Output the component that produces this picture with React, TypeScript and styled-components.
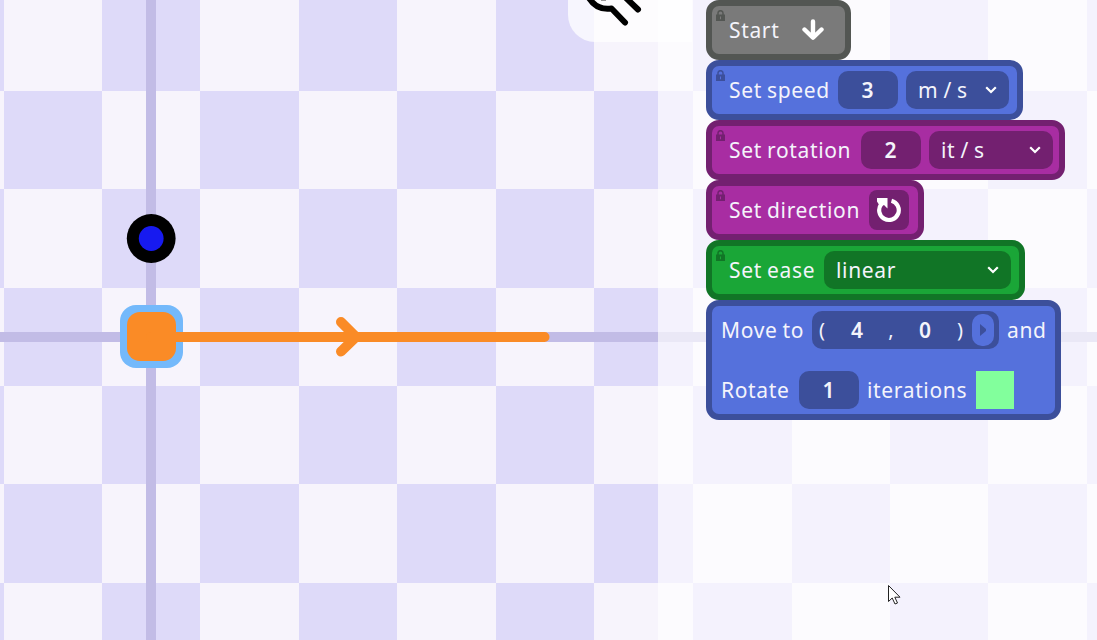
import React from 'react';
import styled, { createGlobalStyle } from 'styled-components';

const GlobalStyle = createGlobalStyle`
  * { box-sizing: border-box; }
  body {
    margin: 0;
    overflow: hidden;
    font-family: 'Noto Sans', 'Open Sans', sans-serif;
    color: #f4f4fb;
  }
`;

const tones = {
  gray: { fill: '#7a7a7a', edge: '#535653' },
  blue: { fill: '#5571dc', edge: '#3c4f9b' },
  purple: { fill: '#a82da2', edge: '#732070' },
  green: { fill: '#1aa637', edge: '#117526' },
};
type Tone = keyof typeof tones;

const Stage = styled.main`
  position: relative;
  width: 1097px;
  height: 640px;
  overflow: hidden;
`;

const Board = styled.div`
  display: grid;
  height: 100%;
  grid-template-columns: 4px 98px 98px 99px 98px 99px 98px 99px 99px 98px 98px 99px 10px;
  grid-template-rows: 91px 98px 99px 98px 98px 99px 57px;
`;

const Cell = styled.div<{ $dark: boolean }>`
  background: ${(p) => (p.$dark ? '#dedaf9' : '#f7f4fc')};
`;

const Drawing = styled.svg`
  position: absolute;
  inset: 0;
`;

const ToolButton = styled.div`
  position: absolute;
  left: 568px;
  top: -58px;
  width: 124px;
  height: 100px;
  border-radius: 0 0 0 27px;
  background: rgba(255, 255, 255, 0.75);
`;

const Panel = styled.section`
  position: absolute;
  top: 0;
  right: 0;
  bottom: 0;
  left: 658px;
  padding-left: 48px;
  display: flex;
  flex-direction: column;
  align-items: flex-start;
  background: rgba(255, 255, 255, 0.65);
`;

const Block = styled.div<{ $tone: Tone; $width: number; $locked?: boolean }>`
  position: relative;
  width: ${(p) => p.$width}px;
  border: 6px solid ${(p) => tones[p.$tone].edge};
  border-radius: 13px;
  background: ${(p) => tones[p.$tone].fill};
  padding-left: ${(p) => (p.$locked ? 17 : 9)}px;
  --edge: ${(p) => tones[p.$tone].edge};
  --fill: ${(p) => tones[p.$tone].fill};
`;

const Line = styled.div`
  display: flex;
  align-items: center;
  gap: 8px;
  height: 48px;
  & + & { margin-top: 12px; }
`;

const Label = styled.span<{ $width: number }>`
  flex: none;
  width: ${(p) => p.$width}px;
  font-size: 21px;
  line-height: 28px;
  letter-spacing: 0.65px;
  word-spacing: -1px;
  white-space: pre;
`;

const NumberField = styled.div`
  flex: none;
  display: grid;
  place-items: center;
  width: 60px;
  height: 38px;
  border-radius: 10px;
  background: var(--edge);
  font-size: 21px;
  font-weight: 600;
  line-height: 28px;
  padding-right: 1px;
`;

const Select = styled.div<{ $width: number }>`
  flex: none;
  display: flex;
  align-items: center;
  justify-content: space-between;
  width: ${(p) => p.$width}px;
  height: 38px;
  padding: 0 12px;
  border-radius: 10px;
  background: var(--edge);
`;

const IconButton = styled.div`
  display: grid;
  place-items: center;
  width: 40px;
  height: 40px;
  border-radius: 8px;
  background: var(--edge);
`;

const PointField = styled.div`
  flex: none;
  display: grid;
  grid-template-columns: 20px 50px 18px 50px 20px 24px;
  align-items: center;
  justify-items: center;
  width: 187px;
  height: 38px;
  padding-right: 5px;
  border-radius: 10px;
  background: var(--edge);
  font-size: 20px;
  line-height: 36px;
`;

const Digit = styled.span`
  font-size: 21px;
  font-weight: 600;
`;

const Pill = styled.span`
  justify-self: end;
  display: grid;
  place-items: center;
  width: 22px;
  height: 32px;
  border-radius: 10px;
  background: var(--fill);
`;

const Swatch = styled.div`
  width: 38px;
  height: 38px;
  background: #82ff9c;
`;

const LockIcon = styled.svg`
  position: absolute;
  left: 4px;
  top: 4px;
`;

const Lock = () => (
  <LockIcon width="9" height="11" viewBox="0 0 9 11">
    <path d="M2 5V3a2.5 2.3 0 0 1 5 0v2" fill="none" stroke="var(--edge)" strokeWidth="1.5" />
    <path d="M0 4.6h9V11H0zM4 6.6v2.6h1V6.6z" fill="var(--edge)" fillRule="evenodd" />
  </LockIcon>
);

const Chevron = () => (
  <svg width="12" height="8" viewBox="0 0 12 8">
    <path d="M1.2 1.2L6 6l4.8-4.8" fill="none" stroke="#fff" strokeWidth="2.2" />
  </svg>
);

const columns = 13;
const cells = Array.from({ length: columns * 7 }, (_, n) => (Math.floor(n / columns) + (n % columns)) % 2 === 0);

export default function App() {
  return (
    <>
      <GlobalStyle />
      <Stage>
        <Board>
          {cells.map((dark, n) => (
            <Cell key={n} $dark={dark} />
          ))}
        </Board>
        <Drawing width="1097" height="640" viewBox="0 0 1097 640">
          <path d="M0 337H1097M151 0V640" stroke="#c2bce6" strokeWidth="10" />
          <rect x="120" y="305" width="63" height="63" rx="16" fill="#74b9fb" />
          <rect x="127" y="312" width="49" height="49" rx="13" fill="#fa8b26" />
          <path
            d="M151 337H544.5M341 322L356 337L341 351.5"
            fill="none"
            stroke="#fa8b26"
            strokeWidth="10"
            strokeLinecap="round"
          />
          <circle cx="151.2" cy="238.5" r="24.4" fill="#000" />
          <circle cx="151.2" cy="238.5" r="12.4" fill="#171af0" />
        </Drawing>
        <ToolButton />
        <Drawing width="1097" height="60" viewBox="0 0 1097 60">
          <g fill="none" stroke="#000" strokeWidth="6" strokeLinecap="round" strokeLinejoin="round">
            <path d="M589 -2C594 6 601 10 611.500 8.500L625 22.500M624 -4L638 9.500" />
          </g>
          <path d="M601 0h5" stroke="#777" strokeWidth="1.500" />
        </Drawing>
        <Panel>
          <Block $tone="gray" $width={145} $locked>
            <Lock />
            <Line>
              <Label $width={65}>Start</Label>
              <svg width="22" height="22" viewBox="0 0 22 22">
                <path d="M11 2.500V18.500M2.500 10.500L11 18.800L19.500 10.500" fill="none" stroke="#fff" strokeWidth="4.400" strokeLinecap="round" strokeLinejoin="round" />
              </svg>
            </Line>
          </Block>
          <Block $tone="blue" $width={317} $locked>
            <Lock />
            <Line>
              <Label $width={101}>Set speed</Label>
              <NumberField>3</NumberField>
              <Select $width={103}>
                <Label $width={50}>m / s</Label>
                <Chevron />
              </Select>
            </Line>
          </Block>
          <Block $tone="purple" $width={359} $locked>
            <Lock />
            <Line>
              <Label $width={124}>Set rotation</Label>
              <NumberField>2</NumberField>
              <Select $width={124}>
                <Label $width={50}>it / s</Label>
                <Chevron />
              </Select>
            </Line>
          </Block>
          <Block $tone="purple" $width={218} $locked>
            <Lock />
            <Line>
              <Label $width={132}>Set direction</Label>
              <IconButton>
                <svg width="26" height="26" viewBox="0 0 26 26">
                  <path d="M15.500 3.700A9.800 9.800 0 1 1 5.200 7.200" fill="none" stroke="#fff" strokeWidth="4.200" />
                  <path d="M1 1H11.500V11.500L8 8L4.500 10L1 4.500z" fill="#fff" />
                </svg>
              </IconButton>
            </Line>
          </Block>
          <Block $tone="green" $width={319} $locked>
            <Lock />
            <Line>
              <Label $width={87}>Set ease</Label>
              <Select $width={187}>
                <Label $width={70}>linear</Label>
                <Chevron />
              </Select>
            </Line>
          </Block>
          <Block $tone="blue" $width={355}>
            <Line>
              <Label $width={83}>Move to</Label>
              <PointField>
                <span>(</span>
                <Digit>4</Digit>
                <span>,</span>
                <Digit>0</Digit>
                <span>)</span>
                <Pill>
                  <svg width="8" height="14" viewBox="0 0 8 14">
                    <path d="M1 1L7 6v2L1 13z" fill="var(--edge)" />
                  </svg>
                </Pill>
              </PointField>
              <Label $width={40}>and</Label>
            </Line>
            <Line>
              <Label $width={70}>Rotate</Label>
              <NumberField>1</NumberField>
              <Label $width={101}>iterations</Label>
              <Swatch />
            </Line>
          </Block>
        </Panel>
        <Drawing width="1097" height="640" viewBox="0 0 1097 640">
          <path d="M888.500 585.500V601.500L892.200 598L895 604L897.500 603L894.800 597.200H900z" fill="#fff" stroke="#222" strokeWidth="1" />
        </Drawing>
      </Stage>
    </>
  );
}
